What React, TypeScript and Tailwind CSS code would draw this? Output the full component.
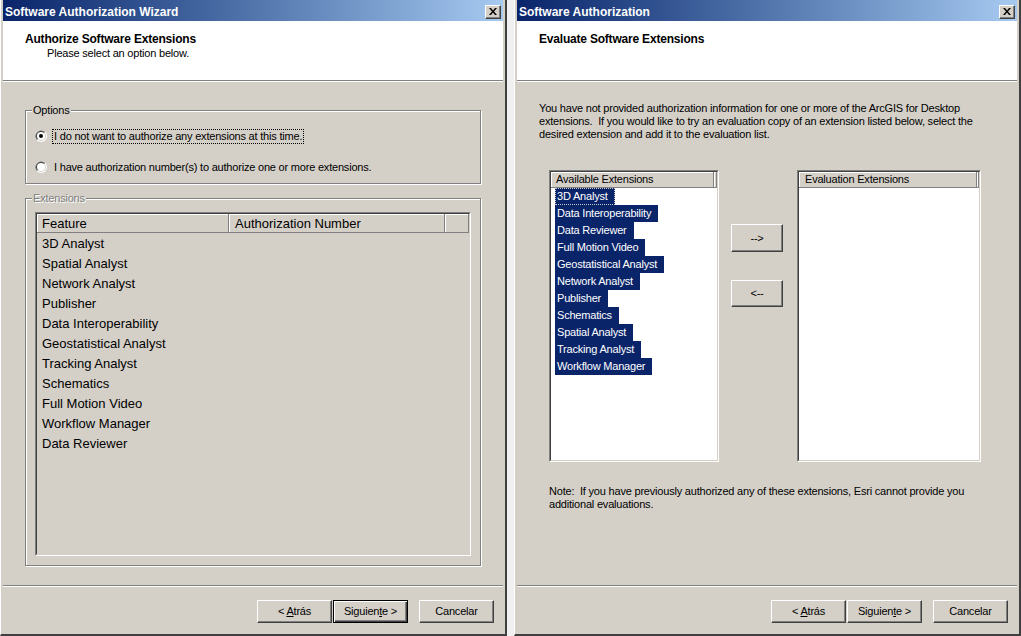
import React from "react";

const tx = "text-[11px] tracking-[-0.2px] leading-[13px]";
const bevel =
  "bg-[#d4d0c8] border border-t-white border-l-white border-r-[#404040] border-b-[#404040] shadow-[inset_-1px_-1px_0_#808080]";

function CloseX() {
  return (
    <div className={`w-[16px] h-[14px] flex items-center justify-center ${bevel}`}>
      <svg width="8" height="7" viewBox="0 0 8 7">
        <path d="M0 0 L2 0 L4 2.5 L6 0 L8 0 L5 3.5 L8 7 L6 7 L4 4.5 L2 7 L0 7 L3 3.5 Z" fill="black" />
      </svg>
    </div>
  );
}

function Radio({ checked }: { checked?: boolean }) {
  return (
    <svg width="12" height="12" viewBox="0 0 12 12" className="shrink-0">
      <circle cx="6" cy="6" r="6" fill="#ffffff" />
      <path d="M1.76 10.24 A6 6 0 0 1 10.24 1.76 Z" fill="#808080" />
      <circle cx="6" cy="6" r="5" fill="#d4d0c8" />
      <path d="M2.46 9.54 A5 5 0 0 1 9.54 2.46 Z" fill="#404040" />
      <circle cx="6" cy="6" r="4" fill="#ffffff" />
      {checked && <circle cx="6" cy="6" r="2" fill="#000000" />}
    </svg>
  );
}

function Btn({
  children,
  def,
  className = "w-[75px] h-[23px]",
}: {
  children: React.ReactNode;
  def?: boolean;
  className?: string;
}) {
  const look = def
    ? "bg-[#d4d0c8] border border-black shadow-[inset_1px_1px_0_white,inset_-1px_-1px_0_#404040,inset_-2px_-2px_0_#808080]"
    : bevel;
  return (
    <div className={`${className} ${look} flex items-center justify-center ${tx} text-black`}>
      <span>{children}</span>
    </div>
  );
}

function Sep() {
  return <div className="h-[2px] border-t border-t-[#808080] border-b border-b-white" />;
}

function Footer({ defNext }: { defNext?: boolean }) {
  return (
    <div className="h-[47px] pt-[13px] pr-[9px] flex justify-end items-start">
      <Btn>
        {"< "}
        <span className="underline">A</span>trás
      </Btn>
      <div className="ml-[1px]">
        <Btn def={defNext}>
          Siguien<span className="underline">t</span>
          {"e >"}
        </Btn>
      </div>
      <div className="ml-[11px]">
        <Btn>Cancelar</Btn>
      </div>
    </div>
  );
}

function Window({
  title,
  heading,
  sub,
  defNext,
  children,
}: {
  title: string;
  heading: string;
  sub?: string;
  defNext?: boolean;
  children: React.ReactNode;
}) {
  return (
    <div className="w-[507px] h-full flex flex-col bg-[#d4d0c8] border-l border-l-white border-r-2 border-r-[#404040] border-b-2 border-b-[#404040] px-[2px]">
      <div className="h-[21px] shrink-0 flex items-center justify-between pl-[2px] pr-[2px] pt-[2px] bg-linear-to-r from-[#0a246a] to-[#a6caf0]">
        <span className="text-white font-bold text-[12px] leading-[14px]">{title}</span>
        <CloseX />
      </div>
      <div className="h-[59px] shrink-0 bg-white pt-[11px] pl-[22px]">
        <div className="font-bold text-[12px] tracking-[-0.2px] leading-[14px] text-black">{heading}</div>
        {sub && <div className={`${tx} pl-[22px] mt-[1px] text-black`}>{sub}</div>}
      </div>
      <Sep />
      <div className="flex-1">{children}</div>
      <Sep />
      <Footer defNext={defNext} />
    </div>
  );
}

const features = [
  "3D Analyst",
  "Spatial Analyst",
  "Network Analyst",
  "Publisher",
  "Data Interoperability",
  "Geostatistical Analyst",
  "Tracking Analyst",
  "Schematics",
  "Full Motion Video",
  "Workflow Manager",
  "Data Reviewer",
];

const available = [
  "3D Analyst",
  "Data Interoperability",
  "Data Reviewer",
  "Full Motion Video",
  "Geostatistical Analyst",
  "Network Analyst",
  "Publisher",
  "Schematics",
  "Spatial Analyst",
  "Tracking Analyst",
  "Workflow Manager",
];

const group =
  "w-[456px] border border-[#808080] shadow-[inset_1px_1px_0_white,1px_1px_0_white]";

function Sunken({ className, inner, children }: { className: string; inner: string; children: React.ReactNode }) {
  return (
    <div className={`${className} border border-t-[#808080] border-l-[#808080] border-r-white border-b-white`}>
      <div className={`h-full border border-t-[#404040] border-l-[#404040] border-r-[#d4d0c8] border-b-[#d4d0c8] ${inner}`}>
        {children}
      </div>
    </div>
  );
}

const headCell = "border-r border-b border-[#808080] shadow-[inset_1px_1px_0_white] bg-[#d4d0c8]";

function LeftBody() {
  return (
    <div className="pl-[22px] pt-[28px]">
      <div className={group}>
        <div className={`-mt-[7px] ml-[6px] ${tx}`}>
          <span className="bg-[#d4d0c8] px-[1px] text-black">Options</span>
        </div>
        <div className="pl-[9px] pb-[9px]">
          <div className="mt-[12px] h-[14px] flex items-center">
            <Radio checked />
            <span className={`ml-[5px] border border-dotted border-black px-[1px] ${tx} text-black`}>
              I do not want to authorize any extensions at this time.
            </span>
          </div>
          <div className="mt-[17px] h-[14px] flex items-center">
            <Radio />
            <span className={`ml-[7px] ${tx} text-black`}>
              I have authorization number(s) to authorize one or more extensions.
            </span>
          </div>
        </div>
      </div>

      <div className={`${group} mt-[14px]`}>
        <div className={`-mt-[7px] ml-[6px] ${tx}`}>
          <span className="bg-[#d4d0c8] px-[1px] text-[#808080] [text-shadow:1px_1px_0_#ffffff]">Extensions</span>
        </div>
        <div className="pl-[9px] pb-[9px] pt-[7px]">
          <Sunken className="w-[436px] h-[344px]" inner="bg-[#d4d0c8]">
            <div className="flex h-[19px] text-[13px] leading-[19px] text-black">
              <div className={`${headCell} w-[192px] pl-[5px]`}>Feature</div>
              <div className={`${headCell} w-[216px] pl-[6px]`}>Authorization Number</div>
              <div className={`${headCell} flex-1`} />
            </div>
            {features.map((f) => (
              <div key={f} className="h-[20px] leading-[21px] pl-[5px] text-[13px] text-black">
                {f}
              </div>
            ))}
          </Sunken>
        </div>
      </div>
    </div>
  );
}

function ListBox({
  label,
  width,
  headW,
  pl,
  items,
}: {
  label: string;
  width: string;
  headW: string;
  pl: string;
  items: string[];
}) {
  return (
    <Sunken className={`${width} h-[292px]`} inner="bg-white">
      <div className="flex h-[16px]">
        <div className={`${headCell} ${headW} ${pl} ${tx} leading-[15px] text-black`}>{label}</div>
        <div className={`${headCell} flex-1`} />
      </div>
      {items.map((it, i) => (
        <div key={it} className="h-[17px] pl-[4px] flex">
          <div
            className={`h-[17px] leading-[15px] pl-[1px] pr-[6px] bg-[#0a246a] text-white text-[11px] tracking-[-0.2px] border ${
              i === 0 ? "border-dotted border-[#c8c8c8]" : "border-[#0a246a]"
            }`}
          >
            {it}
          </div>
        </div>
      ))}
    </Sunken>
  );
}

function RightBody() {
  return (
    <div className="pl-[22px] pt-[20px]">
      <div className={`${tx} text-black whitespace-pre`}>
        {"You have not provided authorization information for one or more of the ArcGIS for Desktop\n"}
        {"extensions.  If you would like to try an evaluation copy of an extension listed below, select the\n"}
        {"desired extension and add it to the evaluation list."}
      </div>
      <div className="mt-[29px] ml-[10px] flex items-start">
        <ListBox label="Available Extensions" width="w-[170px]" headW="w-[163px]" pl="pl-[5px]" items={available} />
        <div className="ml-[12px] pt-[54px] flex flex-col">
          <Btn className="w-[52px] h-[28px]">--&gt;</Btn>
          <div className="mt-[28px]">
            <Btn className="w-[52px] h-[27px]">&lt;--</Btn>
          </div>
        </div>
        <div className="ml-[14px]">
          <ListBox label="Evaluation Extensions" width="w-[184px]" headW="w-[178px]" pl="pl-[6px]" items={[]} />
        </div>
      </div>
      <div className={`mt-[23px] ml-[10px] ${tx} text-black whitespace-pre`}>
        {"Note:  If you have previously authorized any of these extensions, Esri cannot provide you\n"}
        {"additional evaluations."}
      </div>
    </div>
  );
}

export default function App() {
  return (
    <div className="w-[1021px] h-[636px] overflow-hidden flex bg-[#f0f0f0] font-['Liberation_Sans',Arial,sans-serif]">
      <Window
        title="Software Authorization Wizard"
        heading="Authorize Software Extensions"
        sub="Please select an option below."
        defNext
      >
        <LeftBody />
      </Window>
      <div className="w-[7px]" />
      <Window title="Software Authorization" heading="Evaluate Software Extensions">
        <RightBody />
      </Window>
    </div>
  );
}
